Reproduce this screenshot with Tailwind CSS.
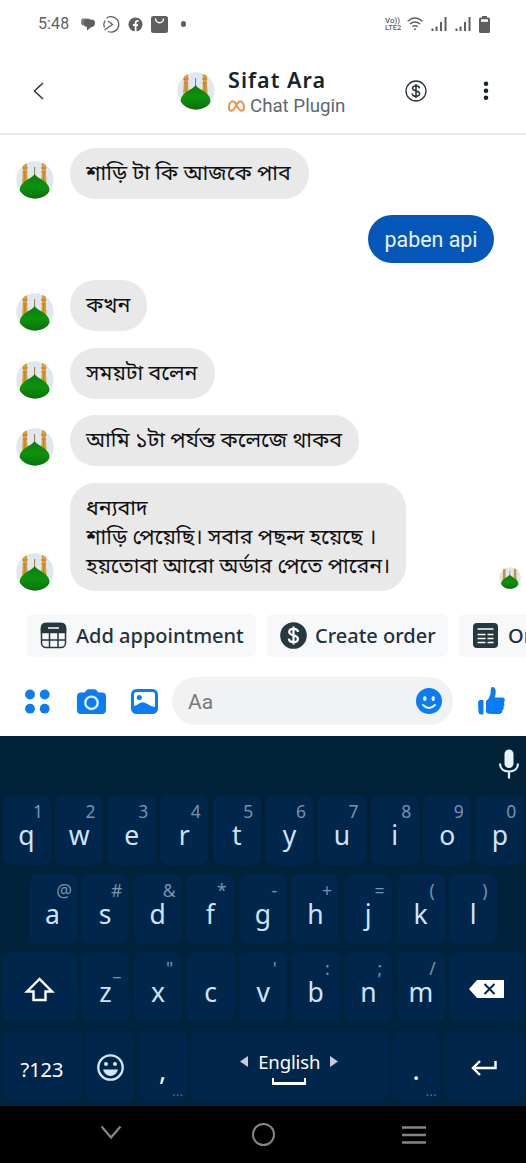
<!DOCTYPE html>
<html lang="bn">
<head>
<meta charset="utf-8">
<title>Chat</title>
<script src="https://cdn.jsdelivr.net/npm/@tailwindcss/browser@4"></script>
</head>
<body class="bg-white">
<svg class="absolute h-0 w-0">
  <defs>
    <clipPath id="round"><circle cx="19" cy="19" r="18.7"/></clipPath>
    <linearGradient id="dome" x1="0" y1="0" x2="0" y2="1"><stop offset="0" stop-color="#107a10"/><stop offset=".5" stop-color="#0d930d"/><stop offset="1" stop-color="#087008"/></linearGradient>
  </defs>
  <symbol id="avatar" viewBox="0 0 38 38">
    <g clip-path="url(#round)">
      <rect width="38" height="38" fill="#dfe8f2"/>
      <rect y="25" width="38" height="13" fill="#eef0f0"/>
      <path d="M7.3 2h3.6l.6 5-.6 2 .8 10v8H6.200v-8l.8-10-.5-2zM26 2h3.600l.7 5-.6 2 .8 10v8h-5.300v-8l.8-10-.6-2z" fill="#d9a03a"/>
      <path d="M6.500 7h5M6.700 11h4.600M25.200 7h5M25.400 11h4.600M8.900 12v13M27.700 12v13" stroke="#b87a1c" stroke-width="1"/>
      <path d="M18.600 6v9" stroke="#a07828" stroke-width="1"/>
      <path d="M18.600 13c1.500 3 6.500 4.500 11 8.500 5 4.500 5 9 1 12.500-3 3-7.500 4-12 4s-9-1-12-4c-4-3.500-4-8 1-12.500 4.500-4 9.500-5.500 11-8.500z" fill="url(#dome)"/>
    </g>
  </symbol>
</svg>
<div class="flex h-[1163px] w-[526px] flex-col overflow-hidden font-['Roboto','Noto_Sans_Bengali',sans-serif]">
  <div class="flex h-12 shrink-0 items-center pl-[38px] pr-9 text-[#5f5f5f]">
    <span class="w-[43px] text-[16px] tracking-[0.1px]">5:48</span>
    <svg class="h-[14px] w-[14px]" viewBox="0 0 14 14" fill="currentColor"><path d="M1 1.500h7.500v3H3v4H1.500Q0 7 0 5t1-3.500z" opacity=".8"/><path d="M5 2.500h5.500C13 2.500 14 4 14 6s-1 4-3.500 4L6 13.500V10C3.500 9.500 2.500 8 2.500 6S3.500 2.500 5 2.500z"/></svg>
    <svg class="ml-2 h-[17px] w-[17px]" viewBox="0 0 17 17" fill="none" stroke="currentColor" stroke-width="1.300"><path d="M3.500 2.200A7.700 7.700 0 1 1 5 15.500M1.500 11.500Q0 8 2 4.500M5 5l4.500 3.500L1.500 14"/></svg>
    <svg class="ml-[8px] h-[15px] w-[15px]" viewBox="0 0 15 15"><circle cx="7.500" cy="7.500" r="7" fill="currentColor"/><path d="M7.600 15V6q0-2.300 3-2.100M5 8h5" fill="none" stroke="#fff" stroke-width="1.800"/></svg>
    <svg class="ml-2 h-[17px] w-[17px]" viewBox="0 0 17 17"><rect width="17" height="17" rx="2.500" fill="currentColor"/><path d="M4.500 2.500a4 4.300 0 0 0 8 0" fill="none" stroke="#fff" stroke-width="1.400"/></svg>
    <i class="ml-[12.500px] h-[5.500px] w-[5.500px] rounded-full bg-current"></i>
    <div class="ml-auto w-[20px] text-[7.500px] font-medium leading-[7px]"><div class="text-[8px]">Vo))</div>LTE2</div>
    <svg class="ml-[2px] h-[14px] w-[16px]" viewBox="0 0 16 14" fill="none" stroke="currentColor" stroke-width="1.400"><path d="M.6 4.200q7.400-6.400 14.800 0M3 7q5-4 10 0M5.300 9.700q2.700-2 5.400 0"/><circle cx="8" cy="12.300" r="1" fill="currentColor" stroke="none"/></svg>
    <svg class="ml-2 h-[14px] w-4" viewBox="0 0 16 14" stroke="currentColor" stroke-width="2"><path d="M1.500 14v-2.500M5.500 14V9.500M10 14V5M14.500 14V0"/></svg>
    <svg class="ml-2 h-[14px] w-4" viewBox="0 0 16 14" stroke="currentColor" stroke-width="2"><path d="M1.500 14v-2.500M5.500 14V9.500M10 14V5M14.500 14V0"/></svg>
    <svg class="ml-2 h-[17px] w-[11px]" viewBox="0 0 11 17"><path d="M3 0h5v1.500h1.500A1.500 1.500 0 0 1 11 3v12.500a1.500 1.500 0 0 1-1.500 1.500h-8A1.500 1.500 0 0 1 0 15.500V3a1.500 1.500 0 0 1 1.500-1.500H3z" fill="currentColor"/><path d="M2 3.300h7v2.500H2z" fill="#fff"/></svg>
  </div>
  <header class="flex h-[87px] shrink-0 items-center border-b-2 border-[#ebebed] pl-[33px] pr-[37px]">
    <svg class="h-[18px] w-[11px]" viewBox="0 0 11 18" fill="none" stroke="#2c3437" stroke-width="1.500"><path d="M10 1L1.500 9l8.500 8"/></svg>
    <svg class="ml-[133px] h-[38px] w-[38px]"><use href="#avatar"/></svg>
    <div class="ml-[13px] w-[130px] pt-1">
      <div class="whitespace-nowrap font-['Noto_Sans'] text-[21.500px] font-semibold leading-[27px] tracking-[1.050px] text-[#14252c]">Sifat Ara</div>
      <div class="flex items-center whitespace-nowrap text-[18.700px] leading-[26px] text-[#5b6970]"><svg class="mr-[5px] h-[12px] w-[17px]" viewBox="0 0 17 12" fill="none" stroke="#e8954a" stroke-width="2"><path d="M8.500 5C7 2 5.800 1.200 4.500 1.200 2.500 1.200 1 4.500 1 7.500c0 2 .8 3.300 2.300 3.300C5.500 10.800 7 8 8.500 5s3-3.800 4-3.800c2 0 3.500 3.300 3.500 6.300 0 2-.8 3.300-2.300 3.300C11.500 10.800 10 8 8.500 5z"/></svg>Chat Plugin</div>
    </div>
    <svg class="ml-auto h-[22px] w-[22px]" viewBox="0 0 22 22" fill="none" stroke="#263238"><circle cx="11" cy="11" r="10" stroke-width="1.300"/><path d="M14.500 8.300C14.300 6.500 13 5.700 11 5.700S7.600 6.600 7.600 8.300c0 3.500 7 1.800 7 5.300 0 1.800-1.500 2.700-3.600 2.700s-3.700-1-3.800-2.900M11 4v14" stroke-width="1.500"/></svg>
    <svg class="ml-[56px] h-[20px] w-[6px]" viewBox="0 0 6 20" fill="#14252c"><circle cx="3" cy="2.800" r="2.300"/><circle cx="3" cy="9.800" r="2.300"/><circle cx="3" cy="16.800" r="2.300"/></svg>
  </header>
  <main class="flex h-[469px] shrink-0 flex-col pl-4 pt-[13px] text-[21.400px] leading-[29px] text-[#111]">
    <div class="flex items-end gap-4"><svg class="h-[38px] w-[38px]"><use href="#avatar"/></svg><p class="h-[51px] w-[239px] whitespace-nowrap rounded-[25px] bg-[#e9e9e9] px-4 py-[10px]">শাড়ি টা কি আজকে পাব</p></div>
    <div class="mr-[32px] mt-4 h-12 w-[126px] self-end whitespace-nowrap rounded-3xl bg-[#0457b8] text-center text-[21.400px] leading-[50px] text-[#eaf3ff]">paben api</div>
    <div class="mt-[17px] flex items-end gap-4"><svg class="h-[38px] w-[38px]"><use href="#avatar"/></svg><p class="h-[51px] w-[77px] whitespace-nowrap rounded-[25px] bg-[#e9e9e9] px-4 py-[10px]">কখন</p></div>
    <div class="mt-[16.500px] flex items-end gap-4"><svg class="h-[38px] w-[38px]"><use href="#avatar"/></svg><p class="h-[51px] w-[145px] whitespace-nowrap rounded-[25px] bg-[#e9e9e9] px-4 py-[10px]">সময়টা বলেন</p></div>
    <div class="mt-[16.500px] flex items-end gap-4"><svg class="h-[38px] w-[38px]"><use href="#avatar"/></svg><p class="h-[51px] w-[289px] whitespace-nowrap rounded-[25px] bg-[#e9e9e9] px-4 py-[10px]">আমি ১টা পর্যন্ত কলেজে থাকব</p></div>
    <div class="mt-[17px] flex items-end gap-4"><svg class="h-[38px] w-[38px]"><use href="#avatar"/></svg><p class="h-[108px] w-[336px] whitespace-nowrap rounded-[25px] bg-[#e9e9e9] px-4 py-[10px]">ধন্যবাদ<br>শাড়ি পেয়েছি। সবার পছন্দ হয়েছে ।<br>হয়তোবা আরো অর্ডার পেতে পারেন।</p><svg class="mb-[2px] ml-auto mr-[5px] h-[22px] w-[22px]" viewBox="0 0 38 38"><use href="#avatar"/></svg></div>
  </main>
  <div class="flex h-[73px] shrink-0 gap-[11px] overflow-hidden pl-[27px] pt-[10px] font-['Noto_Sans'] text-[20px] font-medium text-[#22333b]">
    <div class="flex h-[43px] w-[229px] shrink-0 items-center gap-[9px] whitespace-nowrap rounded-md bg-[#f7f8fa] pl-[13px]"><svg class="h-[27px] w-[27px]" viewBox="0 0 27 27" fill="none" stroke="#263840" stroke-width="1.500"><rect x="1.500" y="1.500" width="24" height="24" rx="4.500"/><path d="M1.500 10.500V6Q1.500 1.500 6 1.500h15q4.500 0 4.500 4.500v4.500z" fill="#263840"/><path d="M9.500 11v14M18 11v14M2 18h23"/><path d="M8 6h11" stroke="#fff"/></svg><span class="pt-px">Add appointment</span></div>
    <div class="flex h-[43px] w-[181px] shrink-0 items-center gap-[8px] whitespace-nowrap rounded-md bg-[#f7f8fa] pl-[13px]"><svg class="h-[27px] w-[27px]" viewBox="0 0 27 27" fill="none"><circle cx="13.500" cy="13.500" r="13.300" fill="#263840"/><path d="M18 10c-.2-2.200-2-3.200-4.500-3.200S9.200 8 9.200 10c0 4.400 8.700 2.300 8.700 6.800 0 2.200-1.800 3.400-4.400 3.400S9 19 8.800 16.700M13.500 4.500v18" stroke="#fff" stroke-width="2.200"/></svg><span class="pt-px">Create order</span></div>
    <div class="flex h-[43px] w-[150px] shrink-0 items-center gap-[10px] whitespace-nowrap rounded-md bg-[#f7f8fa] pl-[14px]"><svg class="h-[25px] w-[25px]" viewBox="0 0 25 25"><rect width="25" height="25" rx="4" fill="#263840"/><path d="M4.500 6h16M4.500 11.500h8M14.500 11.500h6M4.500 15.500h8M14.500 15.500h6M4.500 19.500h8M14.500 19.500h6" stroke="#fff" stroke-width="1.500"/></svg><span class="pt-px">Orders</span></div>
  </div>
  <div class="flex h-[59px] shrink-0 items-start pl-[25px]">
    <svg class="mt-[12px] h-[25px] w-[25px]" viewBox="0 0 25 25" fill="#0a7cf5"><circle cx="5" cy="5.500" r="4.900"/><circle cx="19.700" cy="5.500" r="4.900"/><circle cx="5" cy="19.700" r="4.900"/><circle cx="19.700" cy="19.700" r="4.900"/></svg>
    <svg class="ml-[27px] mt-[12px] h-[25px] w-[29px]" viewBox="0 0 29 25"><path d="M4 3.500h3.500l2-2.200Q10.500.300 12 .300h5q1.500 0 2.500 1l2 2.200H25q4 0 4 4v13.500q0 4-4 4H4q-4 0-4-4V7.500q0-4 4-4z" fill="#0a7cf5"/><circle cx="14.500" cy="13.800" r="6.200" fill="none" stroke="#e3f3ff" stroke-width="2.300"/></svg>
    <svg class="ml-[25px] mt-[12px] h-[25px] w-[27px]" viewBox="0 0 27 25"><rect x="1.500" y="1.500" width="24" height="22" rx="4" fill="#fff" stroke="#0a7cf5" stroke-width="3"/><path d="M2 17.500q4-1.500 7-3.500 3.500-2 7 .8t9 3.500V24H2z" fill="#0a7cf5"/><circle cx="8.300" cy="8.500" r="2.500" fill="#0a7cf5"/></svg>
    <div class="ml-[14px] flex h-[48px] w-[281px] items-center justify-between rounded-full bg-[#f0f2f4] pl-4 pr-[11px]"><span class="pt-1 text-[21px] text-[#777]">Aa</span><svg class="h-[26px] w-[26px]" viewBox="0 0 26 26"><circle cx="13" cy="13" r="13" fill="#0a7cf5"/><ellipse cx="8.800" cy="10.500" rx="1.700" ry="2.500" fill="#eaf6ff"/><ellipse cx="17.200" cy="10.500" rx="1.700" ry="2.500" fill="#eaf6ff"/><path d="M7 17q6 6 12 0" fill="none" stroke="#eaf6ff" stroke-width="2" stroke-linecap="round"/></svg></div>
    <svg class="ml-[24.500px] mt-[10px] h-[28px] w-[27px]" viewBox="0 0 27 28" fill="#0a7cf5"><path d="M1.800 13h3.700v14.500H3Q.8 27.500.500 25L0 16q0-2.500 1.800-3z"/><path d="M8 14q4-3 4.600-8L12.800 2q.2-2 1.700-2 3 0 3.200 4.500 0 3-1 6h7.500Q27 10.700 26.800 13.500q-.1 1.200-1 1.900 1 1 .6 2.500-.3 1-1 1.600.7 1 .2 2.300-.4 1-1.200 1.500.3 3-3 3.700H13Q9.500 27 8 25.300z"/></svg>
  </div>
  <section class="flex h-[370px] shrink-0 flex-col bg-linear-to-b from-[#002136] to-[#002440] font-['Noto_Sans']">
    <div class="flex h-[59px] shrink-0 justify-end pr-[6px] pt-[13px]"><svg class="h-[31px] w-[22px]" viewBox="0 0 22 31" fill="none" stroke="#e8f2fb" stroke-width="2.200"><rect x="6.500" y="0.500" width="9" height="18.500" rx="4.500" fill="#e8f2fb" stroke="none"/><path d="M2 14.500c0 5 3.500 8 9 8s9-3 9-8M11 22.500V29.500"/></svg></div>
    <div class="flex flex-col gap-[8.500px] px-[2.500px] text-[#cfe4fb]">
      <div class="flex gap-[4.600px]" data-row="q1 w2 e3 r4 t5 y6 u7 i8 o9 p0"></div>
      <div class="flex gap-[4.600px] pl-[26px]" data-row="a@ s# d&amp; f* g- h+ j= k( l)"></div>
      <div class="flex gap-[4.600px]">
        <div class="flex h-[70px] w-[74.300px] shrink-0 items-center justify-center rounded-lg bg-[#00264b]"><svg class="mt-1 h-[25px] w-[31px]" viewBox="0 0 31 25" fill="none" stroke="#fff" stroke-width="2.400"><path d="M15.500 2L3 14.500h6.500V23h12v-8.500H28z"/></svg></div>
        <div class="flex gap-[4.600px]" data-row="z_ x&quot; c v' b: n; m/"></div>
        <div class="flex h-[70px] w-[74.300px] shrink-0 items-center justify-center rounded-lg bg-[#00264b]"><svg class="mt-1 h-[18px] w-[35px]" viewBox="0 0 35 18"><path d="M0 9l8-9h27v18H8z" fill="#fff"/><path d="M15.500 4l10 10M25.500 4l-10 10" stroke="#00264b" stroke-width="2"/></svg></div>
      </div>
      <div class="flex gap-[4.500px] text-white">
        <div class="h-[70px] w-[79px] shrink-0 rounded-lg bg-[#00264b] pt-[23px] text-center text-[20px] leading-[32px]">?123</div>
        <div class="flex h-[70px] w-[48px] shrink-0 items-center justify-center rounded-lg bg-[#00264b]"><svg class="mt-[3px] h-[27px] w-[27px]" viewBox="0 0 27 27" fill="#d5e8fb"><circle cx="13.500" cy="13.500" r="12.200" fill="none" stroke="#d5e8fb" stroke-width="2.300"/><circle cx="9" cy="10" r="2"/><circle cx="18" cy="10" r="2"/><path d="M6 15.500h15q-2 6.500-7.500 6.500T6 15.500z"/></svg></div>
        <div class="flex h-[70px] w-[48px] shrink-0 flex-col rounded-lg bg-[#00264b] pt-[21px] text-center text-[27px] leading-[36px]"><span>,</span><span class="pr-[3px] text-right text-[12px] leading-[8px] tracking-[0.500px] text-[#5f7b96]">...</span></div>
        <div class="flex h-[70px] w-[196.500px] shrink-0 flex-col items-center rounded-lg bg-[#00264b] pt-[17px]"><div class="flex items-center gap-[10px] text-[18.500px] leading-[28px]"><svg class="h-[11px] w-[8px]" viewBox="0 0 8 11"><path d="M8 0v11L0 5.500z" fill="#c3cdd6"/></svg><span class="tracking-[-0.100px]">English</span><svg class="h-[11px] w-[8px]" viewBox="0 0 8 11"><path d="M0 0v11l8-5.500z" fill="#c3cdd6"/></svg></div><i class="mt-[2px] h-[7px] w-[34px] border-x-2 border-b-[3px] border-white"></i></div>
        <div class="flex h-[70px] w-[48px] shrink-0 flex-col rounded-lg bg-[#00264b] pt-[21px] text-center text-[27px] leading-[36px]"><span>.</span><span class="pr-[3px] text-right text-[12px] leading-[8px] tracking-[0.500px] text-[#5f7b96]">...</span></div>
        <div class="flex h-[70px] w-[79px] shrink-0 items-center justify-center rounded-lg bg-[#00264b]"><svg class="mt-[5px] h-[16px] w-[26px]" viewBox="0 0 26 16" fill="none" stroke="#fff" stroke-width="2.400"><path d="M24.500 1v7H2M9 1L2 8l7 7"/></svg></div>
      </div>
    </div>
  </section>
  <nav class="flex h-[57px] shrink-0 items-center bg-black pl-[100px]">
    <svg class="-mt-1 h-[15px] w-[22px]" viewBox="0 0 22 15" fill="none" stroke="#858585" stroke-width="2.200"><path d="M1.500 1.500L11 12.500l9.500-11"/></svg>
    <i class="ml-[130px] h-[23px] w-[23px] rounded-full border-[2.500px] border-[#858585]"></i>
    <svg class="ml-[127px] h-[20px] w-[24px]" viewBox="0 0 24 20" stroke="#858585" stroke-width="2.600"><path d="M0 2.500h24M0 10h24M0 17.500h24"/></svg>
  </nav>
</div>
<script>
document.querySelectorAll('[data-row]').forEach(row => {
  row.dataset.row.split(' ').forEach(pair => {
    const key = document.createElement('div');
    key.className = 'flex h-[70px] w-[48px] shrink-0 flex-col rounded-lg bg-[#00264b] pt-2 text-center';
    const hint = document.createElement('span');
    hint.className = 'h-[18px] w-[25px] self-end text-[17.500px] leading-4 text-[#7893ad]';
    hint.textContent = pair.slice(1);
    const letter = document.createElement('span');
    letter.className = 'text-[26.500px] leading-7';
    letter.textContent = pair[0];
    key.append(hint, letter);
    row.append(key);
  });
});
</script>
</body>
</html>
